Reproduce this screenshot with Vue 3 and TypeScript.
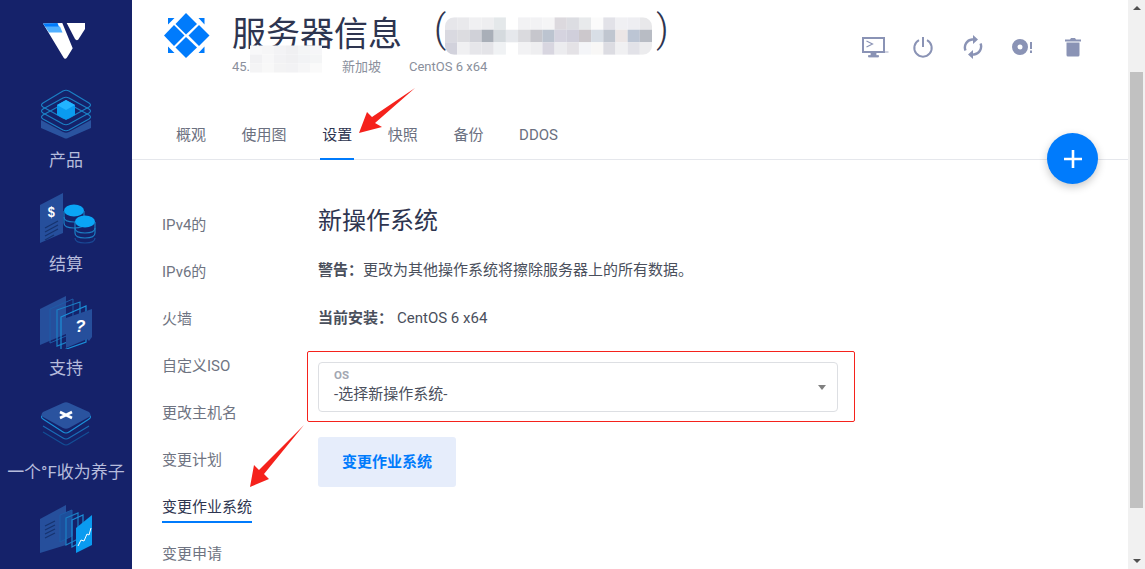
<script setup lang="ts">
const tabs = ['概观', '使用图', '设置', '快照', '备份', 'DDOS']
const sideNav = ['IPv4的', 'IPv6的', '火墙', '自定义ISO', '更改主机名', '变更计划', '变更作业系统', '变更申请']

const titleMosaic: string[][] = [
  ['e6e6ea', 'e9e9ec', 'f0f0f2', 'eeeef0', 'e4e8ea', '', 'f2f2f4', 'f2f2f4', 'f5f5f6', 'dcd9de', 'dcdde2', 'e8eaec', 'fbfbfb', 'e2e2e8', 'f0f0f3', 'eeeef2', 'e8e8ea'],
  ['d9d9e0', 'dcdce0', 'd0d1d8', 'a9afb8', 'd5dade', 'e6e8ec', 'dadade', 'c6c6cc', 'bcc4d0', 'd5d3df', 'd0cfdb', 'ccc8cc', 'd8dee6', 'c0c6d0', 'ece6e6', 'bcc5d4', 'b8bcc4'],
  ['d2d2dc', 'f0f0f2', 'e6e6ea', 'e4e4e8', 'f0f2f4', '', 'f2f2f4', 'eeeef0', 'd8d6e0', 'ececef', 'e4e2e6', 'f4f5f8', 'f8f7f6', 'dcdce2', 'f0f0f2', 'e2e2e8', 'ececee']
]
const ipMosaic: string[][] = [
  ['f8f8f9', 'f6f6f7', 'f3f3f5', 'f0f0f2', 'f4f5f6', 'f6f6f8'],
  ['f1f1f3', 'f7f7f8', 'f2f2f4', 'f0f0f2', 'f2f3f5', 'f4f5f6'],
  ['f4f4f5', 'f8f8f8', 'f3f3f4', 'f2f2f4', 'f6f6f7', 'fafafa']
]
</script>

<template>
  <div class="page">
    <aside class="rail">
      <div class="brand">
        <svg width="42" height="36" viewBox="0 0 42 36">
          <path d="M0 .5 19.300 0 29.700 25.300 24 34.500Q22 37 20.500 34.500z" fill="#fff" />
          <path d="M2 3.500H17L19.500 9.500H6z" fill="#51b0ff" />
          <path d="M0 .5 14.500 0 16 3.700H2.200z" fill="#007bfc" />
          <path d="M23.700 0H42V6L35.300 16.500Q33.500 18 32 16z" fill="#fff" />
        </svg>
      </div>

      <div class="rail-item">
        <svg class="rail-icon" viewBox="0 0 60 54">
          <path d="M5 33 27 45q3 1.500 6 0L55 33v8L32 51q-2 1-4 0L5 41z" fill="#2a539f" />
          <g fill="none" stroke="#1b7fc4" stroke-width="1.200">
            <path d="M7 28 27 17q3-1.500 6 0l20 11q3 2 0 4L33 43q-3 1.500-6 0L7 32q-3-2 0-4z" />
            <path d="M7 22 27 11q3-1.500 6 0l20 11q3 2 0 4L33 37q-3 1.500-6 0L7 26q-3-2 0-4z" />
            <path d="M7 16 27 4q3-1.500 6 0l20 12q3 2 0 4L33 31q-3 1.500-6 0L7 20q-3-2 0-4z" />
          </g>
          <path d="M21 18 30 13l9 5v10l-9 5-9-5z" fill="#0a9bf0" />
          <path d="M21 18 30 13l9 5-9 5z" fill="#22b4ff" />
        </svg>
        <span>产品</span>
      </div>

      <div class="rail-item">
        <svg class="rail-icon" viewBox="0 0 60 54">
          <path d="M4 14 27 2v40L4 52z" fill="#264f9c" />
          <text x="18" y="26" class="dollar" transform="scale(.85 1)" text-anchor="middle">$</text>
          <g stroke="#16336f" stroke-width="1.200">
            <path d="M9 37 22 30M9 41 22 34M9 45 22 38M9 49 18 44" />
          </g>
          <g fill="none" stroke="#1b7fc4" stroke-width="1.200">
            <path d="M28 20v12c0 3 4 5 10 5s10-2 10-5V20" />
            <path d="M28 26c0 3 4 5 10 5s10-2 10-5" />
          </g>
          <ellipse cx="38" cy="19.500" rx="10" ry="6" fill="#0aa5f5" />
          <g fill="none" stroke="#1b7fc4" stroke-width="1.200">
            <path d="M39 31v11c0 3 4 5 10 5s10-2 10-5V31" />
            <path d="M39 37c0 3 4 5 10 5s10-2 10-5" />
          </g>
          <path d="M39 47c0 3 4 5 10 5s10-2 10-5" fill="none" stroke="#1a4a96" stroke-width="1.200" />
          <ellipse cx="49" cy="30.500" rx="10" ry="6" fill="#0aa5f5" />
        </svg>
        <span>结算</span>
      </div>

      <div class="rail-item">
        <svg class="rail-icon" viewBox="0 0 60 54">
          <path d="M4 14 30 1v38L4 50z" fill="#264f9c" />
          <path d="M14 14 37 4v34L14 48z" fill="none" stroke="#1d5ca8" stroke-width="1" />
          <path d="M21 15 44 7v35l-23 9z" fill="none" stroke="#1b7fc4" stroke-width="1.200" />
          <path d="M25 22 50 11v36l-25 9z" fill="none" stroke="#1b8fd8" stroke-width="1.200" />
          <path d="M30 23 56 14v28l-3 4-2-2-21 9z" fill="#264f9c" />
          <text x="39" y="37" class="question">?</text>
        </svg>
        <span>支持</span>
      </div>

      <div class="rail-item">
        <svg class="rail-icon" viewBox="0 0 60 54">
          <g fill="none" stroke-width="1.200">
            <path d="M7 33 27 45q3 2 6 0l20-12" stroke="#134f96" />
            <path d="M7 27 27 39q3 2 6 0l20-12" stroke="#1a6cb6" />
            <path d="M7 20 27 33q3 2 6 0l20-13q3-2 0-4" stroke="#1b8fd8" />
            <path d="M7 16q-3 2 0 4" stroke="#1b8fd8" />
          </g>
          <path d="M7 13 27 4q3-1.500 6 0l20 9q3 3 0 5L33 29q-3 1.500-6 0L7 18q-3-2 0-5z" fill="#2a539f" />
          <path d="M24 13l12 6M36 13l-12 6" stroke="#fff" stroke-width="2.600" />
        </svg>
        <span>一个°F收为养子</span>
      </div>

      <div class="rail-item">
        <svg class="rail-icon" viewBox="0 0 60 54">
          <path d="M4 16 30 2v40L4 50z" fill="#264f9c" />
          <path d="M9 23l10-5M9 27l10-5M9 31l10-5M9 35l10-5" stroke="#16336f" stroke-width="1.200" />
          <path d="M24 12 36 7v26l-12 6z" fill="#1d4f9c" stroke="#1d5ca8" stroke-width="1" />
          <path d="M30 15 42 10v26l-12 6z" fill="none" stroke="#1b7fc4" stroke-width="1.200" />
          <path d="M36 17 47 12v26l-11 6z" fill="none" stroke="#1b8fd8" stroke-width="1.200" />
          <path d="M40 25 56 12v30l-16 8z" fill="#0a9bf0" />
          <path d="M42 43l3-6 3 1 3-7 2 1 2-7" fill="none" stroke="#fff" stroke-width="1" />
        </svg>
      </div>
    </aside>

    <main class="main">
      <header class="head">
        <svg class="head-logo" width="46" height="46" viewBox="0 0 46 46">
          <g fill="#007bfc">
            <path d="M22 0 33 11 22 21.500 11.500 11z" />
            <path d="M10 12 20.500 22.500 10 33 0 22.500z" />
            <path d="M35 12 45.500 22.500 35 33 24.500 22.500z" />
            <path d="M22 24 33 34.500 22 45 11.500 34.500z" />
            <path d="M4 5h6.500L4 11.500zM40.500 5h-6l6 6.500zM4 40v-6.500l6.500 6.500zM40.500 40h-6l6-6.500z" />
          </g>
        </svg>
        <div class="head-text">
          <h1 class="title">
            <span>服务器信息</span>
            <span class="paren open">(</span>
            <svg class="mosaic-title" width="207" height="38" viewBox="0 0 204 37">
              <defs>
                <clipPath id="title-clip"><rect width="204" height="37" rx="9" /></clipPath>
              </defs>
              <g clip-path="url(#title-clip)">
                <template v-for="(row, r) in titleMosaic" :key="r">
                  <template v-for="(c, i) in row" :key="i">
                    <rect v-if="c" :x="i * 12" :y="r * 12.330" width="12" height="12.400" :fill="'#' + c" />
                  </template>
                </template>
              </g>
            </svg>
            <span class="paren">)</span>
          </h1>
          <div class="meta">
            <span class="ip">
              45.
              <svg class="mosaic-ip" width="72" height="28" viewBox="0 0 72 27">
                <template v-for="(row, r) in ipMosaic" :key="r">
                  <rect v-for="(c, i) in row" :key="i" :x="i * 12" :y="r * 9" width="12" height="9" :fill="'#' + c" />
                </template>
              </svg>
            </span>
            <span class="loc">新加坡</span>
            <span>CentOS 6 x64</span>
          </div>
        </div>
        <div class="actions">
          <svg class="act" width="28" height="22" viewBox="0 0 28 22">
            <path d="M2 2h21v14H2z" fill="none" stroke="#8a93b5" stroke-width="2" />
            <path d="M5.500 5l6 3-6 3" fill="none" stroke="#8a93b5" stroke-width="1.200" />
            <path d="M23 16h4.500M10 17h5v2.500h2.500V21H7.500v-1.500H10z" fill="#8a93b5" stroke="#8a93b5" stroke-width=".8" />
          </svg>
          <svg class="act" width="22" height="22" viewBox="0 0 22 22">
            <path d="M7 4.200a8.700 8.700 0 1 0 8 0" fill="none" stroke="#8a93b5" stroke-width="2" />
            <path d="M11 1v10" stroke="#8a93b5" stroke-width="2" />
          </svg>
          <svg class="act" width="20" height="24" viewBox="0 0 20 24">
            <g fill="none" stroke="#8a93b5" stroke-width="2.400">
              <path d="M2.500 15.500a8 8 0 0 1 6.500-11h2" />
              <path d="M17.500 8.500a8 8 0 0 1-6.500 11H9" />
            </g>
            <path d="M10 0l5 4.500L10 9zM10 15l-5 4.500 5 4.500z" fill="#8a93b5" />
          </svg>
          <svg class="act" width="22" height="18" viewBox="0 0 22 18">
            <path fill-rule="evenodd" d="M9 1a8 8 0 1 0 0 16A8 8 0 0 0 9 1zm0 5.500a2.500 2.500 0 1 1 0 5 2.500 2.500 0 0 1 0-5z" fill="#8a93b5" />
            <path d="M19 4h2v7h-2zM19 12.500h2V15h-2z" fill="#8a93b5" />
          </svg>
          <svg class="act" width="16" height="20" viewBox="0 0 16 20">
            <path d="M0 2.500h5L6 1h4l1 1.500h5v2H0zM1.500 5.500h13V18a1.500 1.500 0 0 1-1.500 1.500H3A1.500 1.500 0 0 1 1.500 18z" fill="#8a93b5" />
          </svg>
        </div>
      </header>

      <nav class="tabs">
        <a v-for="t in tabs" :key="t" class="tab" :class="{ active: t === '设置' }">{{ t }}</a>
      </nav>

      <div class="body">
        <ul class="side">
          <li v-for="s in sideNav" :key="s" class="side-item">
            <span :class="{ active: s === '变更作业系统' }">{{ s }}</span>
          </li>
        </ul>
        <section class="content">
          <h2 class="section-title">新操作系统</h2>
          <p class="line"><b>警告&#xFF1A;</b>更改为其他操作系统将擦除服务器上的所有数据。</p>
          <p class="line current"><b>当前安装&#xFF1A;</b><span class="os">CentOS 6 x64</span></p>
          <div class="highlight">
            <div class="select">
              <div class="select-label">OS</div>
              <div class="select-value">-选择新操作系统-</div>
              <i class="select-caret"></i>
            </div>
          </div>
          <button class="submit" type="button">变更作业系统</button>
        </section>
      </div>

      <button class="fab" type="button" aria-label="add">
        <svg width="18" height="18" viewBox="0 0 18 18"><path d="M9 0v18M0 9h18" stroke="#fff" stroke-width="2.600" /></svg>
      </button>
    </main>

    <div class="scrollbar">
      <i class="up"></i>
      <div class="thumb"></div>
      <i class="down"></i>
    </div>

    <svg class="marks" width="1145" height="569" viewBox="0 0 1145 569">
      <path d="M415 88 375 123 382 127 359 133 367 112 372 117z" fill="#f5221c" />
      <path d="M304 425 264 474 269 479 250 487 254 465 259 470z" fill="#f5221c" />
    </svg>
  </div>
</template>

<style>
html, body { margin: 0; background: #fff; overflow: hidden; }
</style>

<style scoped>
.page {
  position: relative;
  display: flex;
  width: 1145px;
  height: 569px;
  overflow: hidden;
  background: #fff;
  font-family: Roboto, "Noto Sans CJK SC", sans-serif;
  color: #4a4f5c;
}
.rail {
  flex: 0 0 132px;
  display: flex;
  flex-direction: column;
  align-items: center;
  background: #15226a;
  overflow: hidden;
}
.brand {
  flex: none;
  align-self: flex-start;
  height: 64px;
  padding: 23px 0 0 43px;
}
.brand svg { display: block; }
.rail-item {
  flex: 0 0 104px;
  display: flex;
  flex-direction: column;
  align-items: center;
  width: 132px;
}
.rail-icon { width: 60px; height: 54px; flex: none; }
.rail-item span {
  margin-top: 7px;
  line-height: 24px;
  font-size: 17px;
  color: #b6bcdc;
  white-space: nowrap;
}
.dollar { font: bold 15px "Liberation Sans", sans-serif; fill: #fff; }
.question { font: italic bold 17px "Liberation Sans", sans-serif; fill: #fff; }

.main { position: relative; flex: 1; min-width: 0; }
.head {
  display: flex;
  height: 109px;
  box-sizing: border-box;
  padding: 13px 0 0 32px;
}
.head-logo { flex: none; }
.head-text { margin-left: 22px; margin-top: -1px; }
.title {
  display: flex;
  align-items: center;
  height: 38px;
  margin: 0;
  font-size: 34px;
  font-weight: 400;
  color: #2e3550;
  white-space: nowrap;
}
.paren { font-family: Roboto, sans-serif; font-size: 38px; font-weight: 300; line-height: 38px; position: relative; top: -2px; }
.paren.open { margin-left: 32px; margin-right: -1px; }
.mosaic-title { margin: 10px 4px 0 0; }
.meta {
  display: flex;
  margin-top: 8px;
  font-size: 13px;
  line-height: 18px;
  color: #8a8f9c;
}
.ip { position: relative; width: 110px; }
.mosaic-ip { position: absolute; left: 18px; top: -13px; }
.loc { width: 67px; }
.actions {
  display: flex;
  align-items: center;
  position: absolute;
  right: 47px;
  top: 35px;
}
.act { display: block; }
.act:nth-child(1) { margin-right: 23px; }
.act:nth-child(2) { margin-right: 29px; }
.act:nth-child(3) { margin-right: 28px; }
.act:nth-child(4) { margin-right: 32px; }

.tabs {
  display: flex;
  gap: 31.600px;
  height: 51px;
  box-sizing: border-box;
  padding-left: 42px;
  border-bottom: 1px solid #e5e7ec;
}
.tab {
  box-sizing: border-box;
  height: 51px;
  padding: 0 2px;
  font-size: 15px;
  line-height: 52px;
  color: #6b7080;
}
.tab.active { color: #2e3550; border-bottom: 2px solid #007bfc; }

.body { display: flex; }
.side {
  flex: 0 0 186px;
  box-sizing: border-box;
  margin: 0;
  padding: 42px 0 0 30px;
  list-style: none;
}
.side-item {
  height: 47px;
  font-size: 15px;
  line-height: 47px;
  color: #6f7482;
  white-space: nowrap;
}
.side-item .active {
  position: relative;
  color: #2e3550;
  display: inline-block;
}
.side-item .active::after {
  content: "";
  position: absolute;
  left: 0;
  right: 0;
  bottom: 8px;
  height: 2px;
  background: #007bfc;
}
.content { flex: 1; min-width: 0; padding-top: 42px; }
.section-title {
  margin: 0;
  height: 38px;
  font-size: 24px;
  font-weight: 400;
  line-height: 38px;
  color: #2e3550;
}
.line {
  margin: 0;
  font-size: 15px;
  line-height: 48px;
  color: #4a4f5c;
  white-space: nowrap;
}
.line:first-of-type { margin-top: 6px; height: 48px; }
.line b { color: #4a4f5c; font-weight: 700; }
.current { height: 33px; }
.os { margin-left: 4px; }
.highlight {
  box-sizing: border-box;
  width: 548px;
  height: 71px;
  margin: 24px 0 15px -11px;
  padding: 10px;
  border: 1px solid #f5221c;
  border-radius: 2px;
}
.select {
  position: relative;
  box-sizing: border-box;
  width: 520px;
  height: 50px;
  padding: 4px 15px;
  border: 1px solid #dddfe3;
  border-radius: 4px;
}
.select-label {
  font-size: 11.500px;
  font-weight: 700;
  line-height: 16px;
  color: #a3a7b2;
}
.select-value {
  margin-top: 1px;
  font-size: 15px;
  line-height: 20px;
  color: #4a4f5c;
}
.select-caret {
  position: absolute;
  right: 11px;
  top: 22px;
  border-left: 4px solid transparent;
  border-right: 4px solid transparent;
  border-top: 5px solid #808080;
}
.submit {
  display: block;
  width: 138px;
  height: 50px;
  padding: 0 0 3px;
  border: 0;
  border-radius: 3px;
  background: #e6edfb;
  color: #007bfc;
  font-family: inherit;
  font-size: 15px;
  font-weight: 700;
}
.fab {
  position: absolute;
  left: 915px;
  top: 133px;
  display: flex;
  align-items: center;
  justify-content: center;
  width: 51px;
  height: 51px;
  padding: 0;
  border: 0;
  border-radius: 50%;
  background: #007bfc;
  box-shadow: 0 3px 8px rgba(0, 0, 0, 0.22);
}
.scrollbar {
  flex: 0 0 17px;
  position: relative;
  background: #f1f1f1;
}
.thumb {
  margin: 72px 2px 0;
  height: 436px;
  background: #c1c1c1;
}
.up, .down {
  position: absolute;
  left: 4.500px;
  border-left: 4px solid transparent;
  border-right: 4px solid transparent;
}
.up { top: 6px; border-bottom: 4px solid #505050; }
.down { bottom: 6px; border-top: 4px solid #505050; }
.marks { position: absolute; left: 0; top: 0; pointer-events: none; }
</style>
